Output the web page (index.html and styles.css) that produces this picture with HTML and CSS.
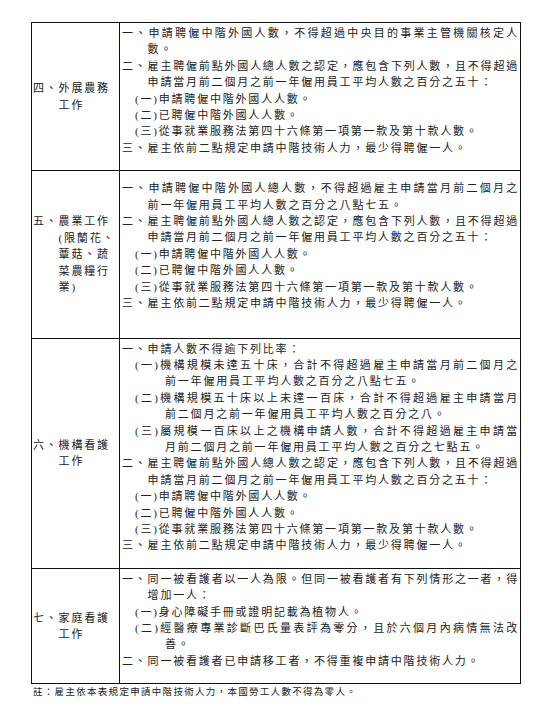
FILE: index.html
```html
<!DOCTYPE html>
<html lang="zh-Hant">
<head>
<meta charset="utf-8">
<title>中階技術人力</title>
<link rel="stylesheet" href="styles.css">
</head>
<body>
<div class="page">
<table class="rules">
<colgroup><col class="c1"><col class="c2"></colgroup>
<tr>
<td class="cat"><div class="label">四、外展農務<br>工作</div></td>
<td class="body">
<p class="l1"><span class="full">一、申請聘僱中階外國人數，不得超過中央目的事業主管機關核定人</span>數。</p>
<p class="l1"><span class="full">二、雇主聘僱前點外國人總人數之認定，應包含下列人數，且不得超過</span>申請當月前二個月之前一年僱用員工平均人數之百分之五十：</p>
<p class="l2">(一)申請聘僱中階外國人人數。</p>
<p class="l2">(二)已聘僱中階外國人人數。</p>
<p class="l2">(三)從事就業服務法第四十六條第一項第一款及第十款人數。</p>
<p class="l1">三、雇主依前二點規定申請中階技術人力，最少得聘僱一人。</p>
</td>
</tr>
<tr>
<td class="cat"><div class="label">五、農業工作<br>(限蘭花、<br>蕈菇、蔬<br>菜農糧行<br>業)</div></td>
<td class="body body-loose">
<p class="l1"><span class="full">一、申請聘僱中階外國人總人數，不得超過雇主申請當月前二個月之</span>前一年僱用員工平均人數之百分之八點七五。</p>
<p class="l1"><span class="full">二、雇主聘僱前點外國人總人數之認定，應包含下列人數，且不得超過</span>申請當月前二個月之前一年僱用員工平均人數之百分之五十：</p>
<p class="l2">(一)申請聘僱中階外國人人數。</p>
<p class="l2">(二)已聘僱中階外國人人數。</p>
<p class="l2">(三)從事就業服務法第四十六條第一項第一款及第十款人數。</p>
<p class="l1">三、雇主依前二點規定申請中階技術人力，最少得聘僱一人。</p>
</td>
</tr>
<tr>
<td class="cat"><div class="label">六、機構看護<br>工作</div></td>
<td class="body">
<p class="l1">一、申請人數不得逾下列比率：</p>
<p class="l2"><span class="full">(一)機構規模未達五十床，合計不得超過雇主申請當月前二個月之</span>前一年僱用員工平均人數之百分之八點七五。</p>
<p class="l2"><span class="full">(二)機構規模五十床以上未達一百床，合計不得超過雇主申請當月</span>前二個月之前一年僱用員工平均人數之百分之八。</p>
<p class="l2"><span class="full">(三)屬規模一百床以上之機構申請人數，合計不得超過雇主申請當</span>月前二個月之前一年僱用員工平均人數之百分之七點五。</p>
<p class="l1"><span class="full">二、雇主聘僱前點外國人總人數之認定，應包含下列人數，且不得超過</span>申請當月前二個月之前一年僱用員工平均人數之百分之五十：</p>
<p class="l2">(一)申請聘僱中階外國人人數。</p>
<p class="l2">(二)已聘僱中階外國人人數。</p>
<p class="l2">(三)從事就業服務法第四十六條第一項第一款及第十款人數。</p>
<p class="l1">三、雇主依前二點規定申請中階技術人力，最少得聘僱一人。</p>
</td>
</tr>
<tr>
<td class="cat"><div class="label">七、家庭看護<br>工作</div></td>
<td class="body">
<p class="l1"><span class="full">一、同一被看護者以一人為限。但同一被看護者有下列情形之一者，得</span>增加一人：</p>
<p class="l2">(一)身心障礙手冊或證明記載為植物人。</p>
<p class="l2"><span class="full">(二)經醫療專業診斷巴氏量表評為零分，且於六個月內病情無法改</span>善。</p>
<p class="l1">二、同一被看護者已申請移工者，不得重複申請中階技術人力。</p>
</td>
</tr>
</table>
<p class="note">註：雇主依本表規定申請中階技術人力，本國勞工人數不得為零人。</p>
</div>
</body>
</html>
```
FILE: styles.css
```css
body {
  margin: 0;
  background: #fff;
  color: #222;
  font-family: "Liberation Serif", "Noto Sans CJK TC", serif;
}

.page {
  padding: 22px 0 0 31px;
}

.rules {
  border-collapse: collapse;
  table-layout: fixed;
  width: 490px;
}

.c1 { width: 88px; }

.rules td {
  border: 1px solid #111;
  padding: 0;
  vertical-align: top;
  font-size: 11px;
  line-height: 16.4px;
  letter-spacing: 1.8px;
}

.rules td.cat {
  vertical-align: middle;
  padding: 0 0 0 1px;
}

.label {
  padding-left: 25.6px;
  text-indent: -25.6px;
}

.rules td.body {
  padding: 2px 1px 14px 2px;
}

.rules td.body-loose {
  padding: 9px 1px 26px 2px;
}

.body p {
  margin: 0;
}

.l1 {
  padding-left: 25.6px;
  text-indent: -25.6px;
}

.l2 {
  padding-left: 43px;
  text-indent: -30px;
}

.full {
  display: block;
  text-align: justify;
  text-align-last: justify;
}

.note {
  margin: 2px 0 0 2px;
  font-size: 9.5px;
  line-height: 12px;
  letter-spacing: 1.3px;
}
```
